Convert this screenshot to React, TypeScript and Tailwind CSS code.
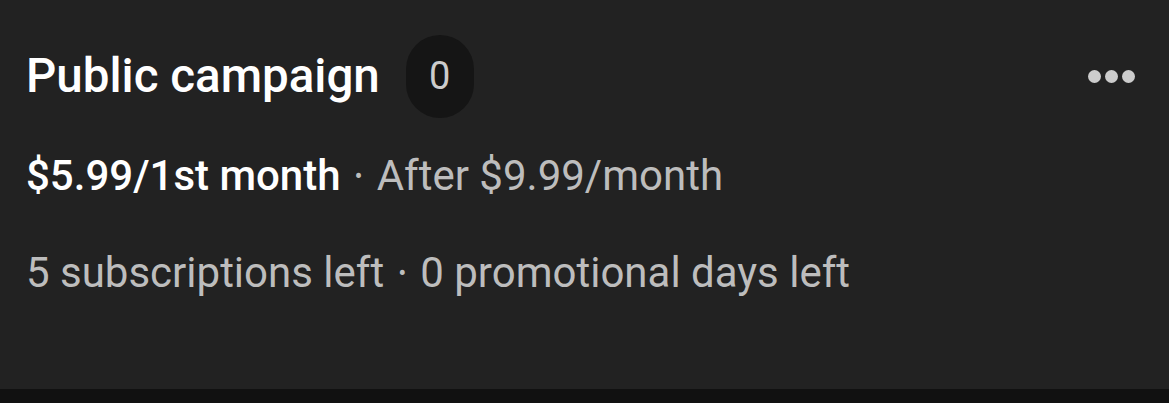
export default function App() {
  return (
    <div className="w-[1169px] h-[403px] flex flex-col bg-[#111111]" style={{ fontFamily: 'Roboto, "Liberation Sans", sans-serif' }}>
      <div className="h-[389px] bg-[#222222] pl-[26px] pr-[34px] flex flex-col">
        <div className="flex items-center h-[83px] mt-[35px]">
          <h1 className="text-[47.5px] font-medium text-white leading-none">Public campaign</h1>
          <span className="ml-[26px] w-[68px] h-[83px] rounded-full bg-[#151515] flex items-center justify-center text-[38px] text-[#cccccc]">
            0
          </span>
          <div className="ml-auto flex gap-[4px]">
            <span className="w-[13px] h-[13px] rounded-full bg-[#cccccc]" />
            <span className="w-[13px] h-[13px] rounded-full bg-[#cccccc]" />
            <span className="w-[13px] h-[13px] rounded-full bg-[#cccccc]" />
          </div>
        </div>
        <p className="mt-[33px] text-[42px] leading-[50px] text-[#bdbdbd] flex items-center">
          <span className="font-medium text-white">$5.99/1st month</span>
          <span className="mx-[14px] text-[24px]">•</span>
          <span>After $9.99/month</span>
        </p>
        <p className="mt-[47px] text-[42px] leading-[50px] text-[#bdbdbd] flex items-center">
          <span>5 subscriptions left</span>
          <span className="mx-[14px] text-[24px]">•</span>
          <span>0 promotional days left</span>
        </p>
      </div>
    </div>
  );
}
